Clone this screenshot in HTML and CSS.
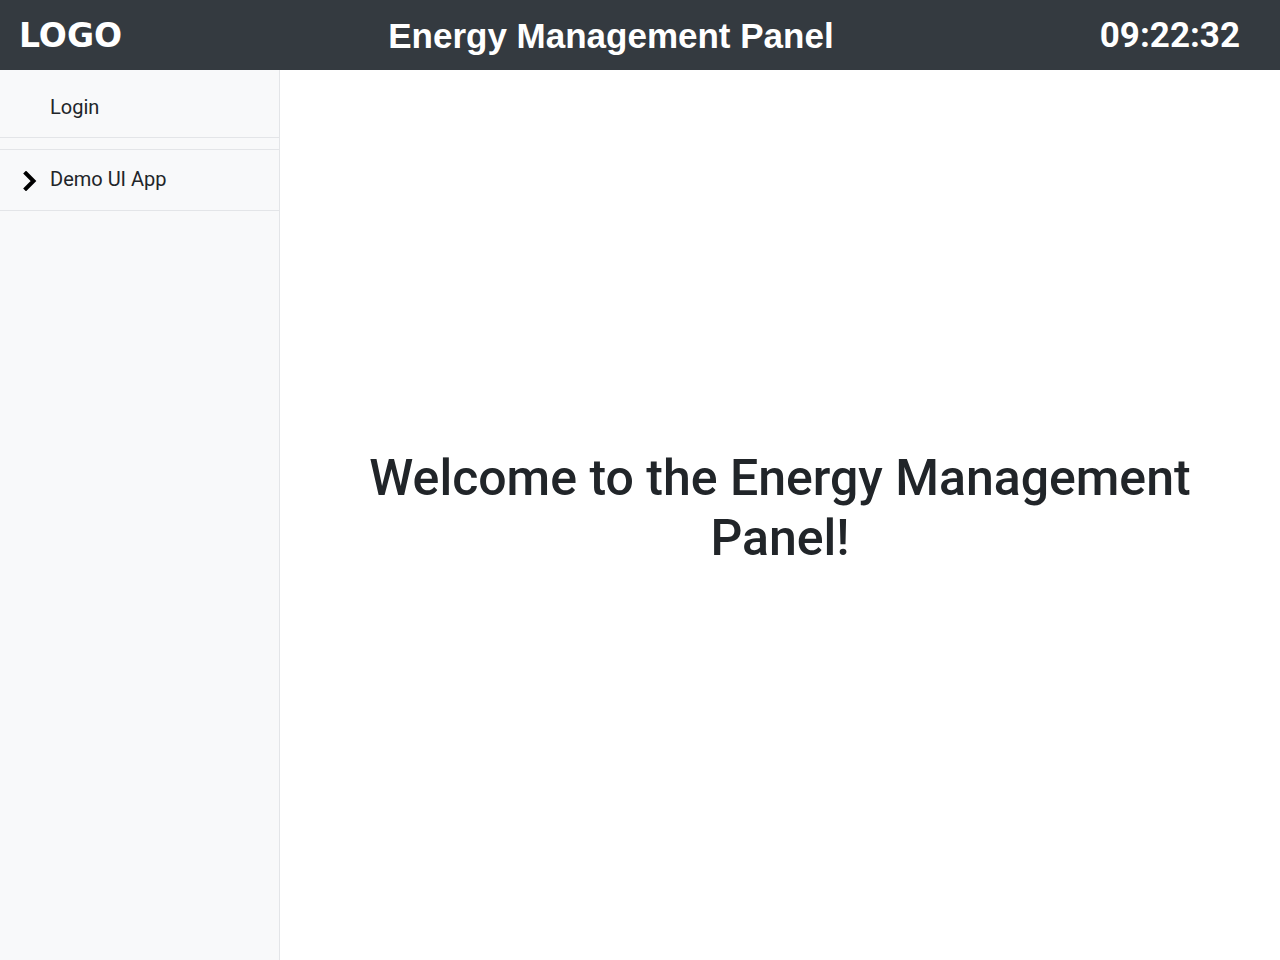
FILE: index.html
```html
<!DOCTYPE html>
<html lang="en">
<head>
<meta charset="utf-8">
<title>Energy Management Panel</title>
<link rel="stylesheet" href="styles.css">
</head>
<body>
<header class="topbar">
  <div class="logo">LOGO</div>
  <div class="title">Energy Management Panel</div>
  <div class="clock">09:22:32</div>
</header>
<div class="layout">
  <nav class="sidebar">
    <div class="nav-item nav-login">Login</div>
    <div class="nav-item nav-group">
      <svg class="chev" width="15" height="20" viewBox="0 0 15 20"><polyline points="4,2.5 11.5,10 4,17.5" fill="none" stroke="#000" stroke-width="4" stroke-linecap="square" stroke-linejoin="miter"/></svg>
      <span>Demo UI App</span>
    </div>
  </nav>
  <main class="content">
    <h1 class="welcome">Welcome to the Energy Management Panel!</h1>
  </main>
</div>
</body>
</html>
```
FILE: styles.css
```css
* { box-sizing: border-box; }
html, body { margin: 0; padding: 0; height: 100%; }
body { font-family: Roboto, "Liberation Sans", sans-serif; color: #212529; background: #fff; display: flex; flex-direction: column; }
.topbar {
  height: 70px; flex: none; background: #343a40; color: #fff;
  display: flex; align-items: center; justify-content: space-between;
  padding: 0 40px 0 19px;
}
.logo { font-family: "DejaVu Sans", sans-serif; font-weight: bold; font-size: 33px; }
.title { font-family: "Liberation Sans", Arial, sans-serif; font-weight: bold; font-size: 35px; padding-top: 2px; }
.clock { font-family: Roboto, sans-serif; font-weight: bold; font-size: 35px; }
.layout { flex: 1; display: flex; min-height: 0; }
.sidebar { width: 280px; flex: none; background: #f8f9fa; border-right: 1px solid #e3e5e8; }
.nav-item { display: flex; align-items: center; font-size: 20px; border-bottom: 1px solid #e3e5e8; }
.nav-login { height: 68px; padding-left: 50px; padding-top: 6px; margin-bottom: 11px; }
.nav-group { height: 62px; padding-left: 22px; padding-bottom: 2px; border-top: 1px solid #e3e5e8; }
.chev { margin-right: 13px; margin-top: 3px; }
.content { flex: 1; display: flex; align-items: center; justify-content: center; padding: 0 60px; }
.welcome { margin: 0 0 14px; font-size: 50px; font-weight: 500; line-height: 60px; text-align: center; max-width: 860px; }
```
